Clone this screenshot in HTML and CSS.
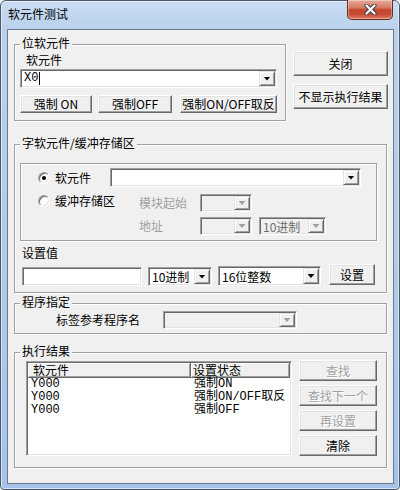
FILE: index.html
```html
<!DOCTYPE html>
<html lang="zh-CN">
<head>
    <meta charset="UTF-8">
    <title>软元件测试</title>
    <link rel="stylesheet" href="styles.css">
</head>
<body>

<div class="window">
    <div class="titlebar">
        <span class="title">软元件测试</span>
        <button class="close-btn" aria-label="关闭">
            <svg width="13" height="11" viewBox="0 0 13 11">
                <path d="M2.5 1.5 L10.5 9.5 M10.5 1.5 L2.5 9.5" stroke="#3a3f48" stroke-width="4.2" stroke-linecap="round"/>
                <path d="M2.5 1.5 L10.5 9.5 M10.5 1.5 L2.5 9.5" stroke="#fff" stroke-width="2.2" stroke-linecap="round"/>
            </svg>
        </button>
    </div>

    <div class="client">

        <!-- bit device -->
        <div class="top-row">
            <div class="group group-bit">
                <div class="group-title">位软元件</div>
                <div class="field-label bit-label">软元件</div>
                <div class="combo combo-device">
                    <span class="combo-text mono">X0<i class="caret"></i></span>
                    <span class="drop"></span>
                </div>
                <div class="force-row">
                    <button class="btn mono force-on">强制 ON</button>
                    <button class="btn mono force-off">强制OFF</button>
                    <button class="btn mono force-toggle">强制ON/OFF取反</button>
                </div>
            </div>
            <div class="side-buttons">
                <button class="btn">关闭</button>
                <button class="btn">不显示执行结果</button>
            </div>
        </div>

        <!-- word device / buffer memory -->
        <div class="group group-word">
            <div class="group-title">字软元件/缓冲存储区</div>
            <div class="sub-box">
                <div class="opt-row row-device">
                    <span class="radio checked"></span>
                    <span class="opt-label lbl-device">软元件</span>
                    <div class="combo combo-word">
                        <span class="combo-text"></span>
                        <span class="drop"></span>
                    </div>
                </div>
                <div class="opt-row row-buffer">
                    <span class="radio"></span>
                    <span class="opt-label lbl-buffer">缓冲存储区</span>
                    <span class="dim-label">模块起始</span>
                    <div class="combo disabled combo-small">
                        <span class="combo-text"></span>
                        <span class="drop"></span>
                    </div>
                </div>
                <div class="opt-row row-addr">
                    <span class="dim-label">地址</span>
                    <div class="combo disabled combo-small">
                        <span class="combo-text"></span>
                        <span class="drop"></span>
                    </div>
                    <div class="combo disabled combo-radix">
                        <span class="combo-text">10进制</span>
                        <span class="drop"></span>
                    </div>
                </div>
            </div>

            <div class="field-label set-label">设置值</div>
            <div class="set-row">
                <div class="edit"></div>
                <div class="combo combo-radix2">
                    <span class="combo-text">10进制</span>
                    <span class="drop"></span>
                </div>
                <div class="combo combo-type">
                    <span class="combo-text">16位整数</span>
                    <span class="drop"></span>
                </div>
                <button class="btn btn-set">设置</button>
            </div>
        </div>

        <!-- program -->
        <div class="group group-prog">
            <div class="group-title">程序指定</div>
            <div class="prog-row">
                <span class="prog-label">标签参考程序名</span>
                <div class="combo disabled combo-prog">
                    <span class="combo-text"></span>
                    <span class="drop"></span>
                </div>
            </div>
        </div>

        <!-- results -->
        <div class="group group-result">
            <div class="group-title">执行结果</div>
            <div class="result-row">
                <div class="list">
                    <div class="list-head">
                        <span>软元件</span>
                        <span>设置状态</span>
                    </div>
                    <div class="list-item mono"><span>Y000</span><span>强制ON</span></div>
                    <div class="list-item mono"><span>Y000</span><span>强制ON/OFF取反</span></div>
                    <div class="list-item mono"><span>Y000</span><span>强制OFF</span></div>
                </div>
                <div class="result-buttons">
                    <button class="btn" disabled>查找</button>
                    <button class="btn" disabled>查找下一个</button>
                    <button class="btn" disabled>再设置</button>
                    <button class="btn">清除</button>
                </div>
            </div>
        </div>

    </div>
</div>

</body>
</html>
```

FILE: styles.css
```css
/* Reset */
* {
    margin: 0;
    padding: 0;
    box-sizing: border-box;
}

body {
    background: #fff;
    font-family: "Noto Sans CJK SC", sans-serif;
    font-size: 12px;
    line-height: 14px;
    color: #000;
}

.mono {
    font-family: "Liberation Mono", "Noto Sans CJK SC", monospace;
}

/* Window frame */
.window {
    width: 400px;
    height: 490px;
    padding: 0 5px 5px 6px;
    border: 1px solid #4a5869;
    border-radius: 6px 6px 4px 4px;
    background: linear-gradient(180deg, #c9dcf2 0%, #b9d1ec 30px, #afc9e9 60%, #a6c3e7 100%);
    box-shadow: inset 0 0 0 1px rgba(255, 255, 255, 0.55);
}

.titlebar {
    height: 28px;
    display: flex;
    justify-content: space-between;
    align-items: flex-start;
}

.title {
    padding: 6px 0 0 1px;
}

.close-btn {
    width: 46px;
    height: 20px;
    margin: -1px 1px 0 0;
    border: 1px solid #6a2c22;
    border-top: none;
    border-radius: 0 0 5px 5px;
    background: linear-gradient(180deg, #e7ab9a 0%, #d67a63 40%, #c4452e 52%, #c64a33 75%, #dc7d60 100%);
    box-shadow: inset 0 0 0 1px rgba(255, 255, 255, 0.35);
    display: flex;
    align-items: center;
    justify-content: center;
}

/* Client area */
.client {
    width: 387px;
    height: 455px;
    border: 1px solid #6b7a8c;
    background: #f0f0f0;
}

/* Group boxes (etched) */
.group {
    border: 1px solid #a0a0a0;
    box-shadow: 1px 1px 0 #fff, inset 1px 1px 0 #fff;
}

.group-title {
    width: fit-content;
    margin-top: -9px;
    padding: 0 2px;
    background: #f0f0f0;
}

.top-row {
    display: flex;
    align-items: flex-start;
    margin: 14px 0 0 6px;
}

.group-bit {
    width: 272px;
    padding: 0 8px 7px 5px;
}

.bit-label {
    margin: 3px 0 0 6px;
}

.combo-device {
    margin-top: 2px;
    width: 257px;
}

.force-row {
    display: flex;
    margin-top: 7px;
}

.force-row .btn {
    height: 18px;
}

.force-on { width: 72px; }
.force-off { width: 74px; margin-left: 6px; }
.force-toggle { width: 97px; margin-left: 8px; }

.side-buttons {
    display: flex;
    flex-direction: column;
    gap: 8px;
    margin: 7px 0 0 7px;
}

.side-buttons .btn {
    width: 95px;
    height: 25px;
}

/* Buttons */
.btn {
    font: inherit;
    color: #000;
    background: #f0f0f0;
    border: 1px solid;
    border-color: #fff #696969 #696969 #fff;
    box-shadow: inset -1px -1px 0 #a0a0a0, inset 1px 1px 0 #e3e3e3;
    display: flex;
    align-items: center;
    justify-content: center;
    white-space: nowrap;
}

.btn:disabled {
    color: #a0a0a0;
    text-shadow: 1px 1px 0 #fff;
}

/* Sunken fields */
.combo,
.edit,
.list,
.radio {
    border: 1px solid;
    border-color: #a0a0a0 #fff #fff #a0a0a0;
    box-shadow: inset 1px 1px 0 #696969, inset -1px -1px 0 #e3e3e3;
    background: #fff;
}

.combo {
    display: flex;
    height: 19px;
    padding: 1px;
}

.combo-text {
    flex: 1;
    padding-left: 2px;
    line-height: 15px;
    white-space: nowrap;
    display: flex;
    align-items: center;
}

.caret {
    display: inline-block;
    width: 1px;
    height: 13px;
    margin-left: 1px;
    background: #000;
}

.drop {
    width: 16px;
    border: 1px solid;
    border-color: #e3e3e3 #696969 #696969 #e3e3e3;
    box-shadow: inset 1px 1px 0 #fff, inset -1px -1px 0 #a0a0a0;
    background: #f0f0f0;
    display: flex;
    align-items: center;
    justify-content: center;
}

.drop::after {
    content: "";
    width: 7px;
    height: 4px;
    background: #000;
    clip-path: polygon(0 0, 100% 0, 50% 100%);
}

.combo.disabled {
    background: #f0f0f0;
}

.combo.disabled .combo-text {
    color: #6d6d6d;
}

.combo.disabled .drop::after {
    background: #a0a0a0;
}

.edit {
    height: 19px;
}

/* Word device group */
.group-word {
    width: 373px;
    margin: 23px 0 0 6px;
    padding: 0 9px 6px 5px;
}

.sub-box {
    margin-top: 13px;
    border: 1px solid #a0a0a0;
    box-shadow: 1px 1px 0 #fff, inset 1px 1px 0 #fff;
    padding: 4px 0 5px;
}

.opt-row {
    display: flex;
    align-items: center;
}

.row-buffer { margin-top: 7px; }
.row-addr { margin-top: 5px; }

.radio {
    width: 12px;
    height: 12px;
    border-radius: 50%;
    margin-left: 17px;
    display: flex;
    align-items: center;
    justify-content: center;
}

.radio.checked::after {
    content: "";
    width: 4px;
    height: 4px;
    border-radius: 50%;
    background: #000;
}

.opt-label {
    margin-left: 5px;
}

.lbl-device { width: 55px; }
.lbl-buffer { width: 84px; }

.row-buffer .radio,
.row-buffer .lbl-buffer {
    margin-bottom: 4px;
}

.dim-label {
    width: 61px;
    color: #a0a0a0;
}

.row-addr .dim-label {
    margin-left: 118px;
}

.combo-word { width: 251px; }
.combo-small { width: 52px; height: 18px; }
.combo-radix { width: 67px; height: 18px; margin-left: 7px; }

.set-label {
    margin: 5px 0 0 2px;
}

.set-row {
    display: flex;
    align-items: flex-end;
    height: 22px;
    margin-top: 4px;
}

.set-row .edit {
    width: 120px;
    margin-left: 2px;
}

.combo-radix2 { width: 64px; margin-left: 6px; }
.combo-type { width: 103px; height: 20px; margin-left: 6px; }

.btn-set {
    width: 46px;
    height: 21px;
    margin: 0 0 1px 8px;
}

/* Program group */
.group-prog {
    width: 373px;
    margin: 10px 0 0 6px;
    padding: 0 9px 4px 5px;
}

.prog-row {
    display: flex;
    align-items: center;
    height: 18px;
    margin-top: 2px;
}

.prog-label {
    width: 107px;
    margin-left: 36px;
}

.combo-prog { width: 134px; height: 18px; }

/* Result group */
.group-result {
    width: 373px;
    margin: 18px 0 0 6px;
    padding: 0 9px 11px 5px;
}

.result-row {
    display: flex;
    align-items: flex-start;
    margin-top: 2px;
}

.list {
    width: 272px;
    height: 95px;
    margin: 1px 0 0 6px;
    padding: 1px;
}

.list-head,
.list-item {
    display: grid;
    grid-template-columns: 163px 1fr;
}

.list-head span {
    height: 15px;
    line-height: 13px;
    padding-left: 5px;
    background: #f0f0f0;
    border-right: 1px solid #696969;
    border-bottom: 1px solid #696969;
    box-shadow: inset 1px 1px 0 #fff, inset -1px -1px 0 #a0a0a0;
}

.list-head span + span {
    padding-left: 2px;
}

.list-item span {
    line-height: 13px;
    padding-left: 3px;
    white-space: nowrap;
}

.result-buttons {
    display: flex;
    flex-direction: column;
    gap: 4px;
    margin-left: 7px;
}

.result-buttons .btn {
    width: 78px;
    height: 21px;
}
```
